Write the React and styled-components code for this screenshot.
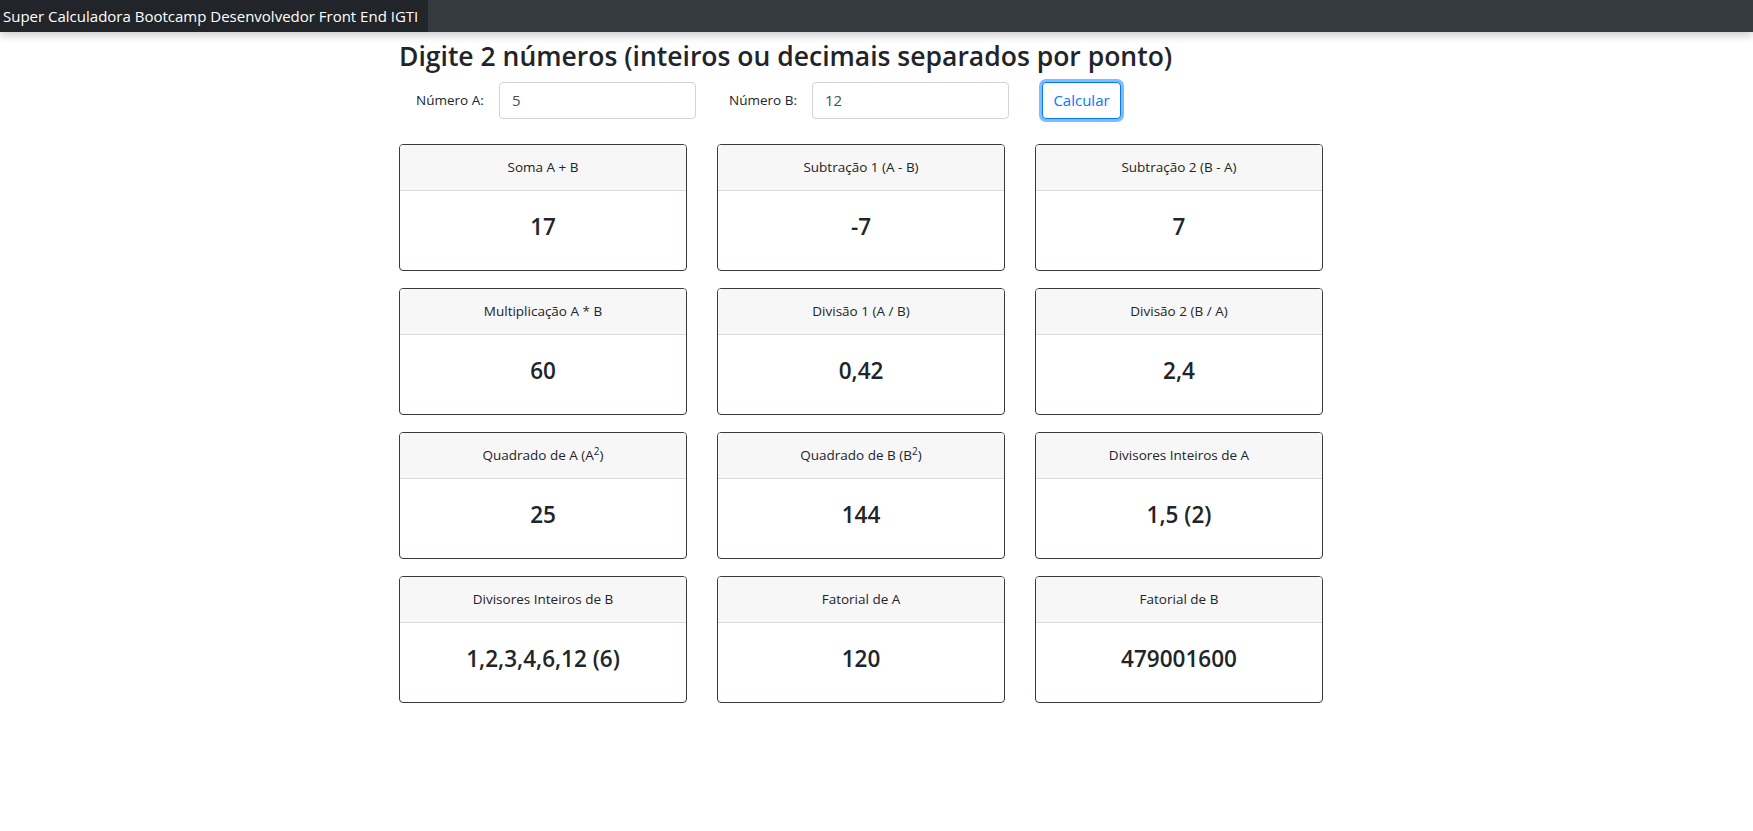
import React, { useState } from 'react';
import styled, { createGlobalStyle } from 'styled-components';

const GlobalStyle = createGlobalStyle`
    * {
        box-sizing: border-box;
    }
    body {
        margin: 0;
        background: #fff;
        color: #212529;
        font-family: "Open Sans", "Noto Sans", sans-serif;
    }
`;

const StyledNavbar = styled.header`
    height: 32px;
    display: flex;
    background-color: #343a40;
    box-shadow: 0 3px 10px rgba(0, 0, 0, .22);
`;

const StyledBrand = styled.div`
    display: flex;
    align-items: center;
    width: 428px;
    padding: 0 3px;
    background-color: #212529;
    color: #fff;
    font-size: 15px;
    white-space: nowrap;
`;

const StyledMain = styled.main`
    width: 955px;
    margin: 0 auto;
`;

const StyledTitle = styled.h1`
    margin: 9px 0 9px;
    font-size: 26.5px;
    font-weight: 600;
    line-height: 1.2;
    white-space: nowrap;
`;

const StyledForm = styled.form`
    display: flex;
    align-items: center;
    gap: 33px;
    padding-left: 17px;
`;

const StyledField = styled.label`
    display: flex;
    align-items: center;
    gap: 17px;
    font-size: 13.5px;
`;

const StyledLabelText = styled.span`
    flex-shrink: 0;
    width: 66px;
    white-space: nowrap;
`;

const StyledInput = styled.input`
    flex-shrink: 0;
    width: 197px;
    height: 37px;
    padding: 0 12px;
    border: 1px solid #ced4da;
    border-radius: 4px;
    font-family: inherit;
    font-size: 15px;
    color: #495057;
    outline: none;
`;

const StyledButton = styled.button`
    flex-shrink: 0;
    width: 79px;
    height: 37px;
    padding: 0;
    border: 1px solid #007bff;
    border-radius: 4px;
    background: #fff;
    color: #007bff;
    font-family: inherit;
    font-size: 15px;
    box-shadow: 0 0 0 3px rgba(0, 123, 255, .5);
    cursor: pointer;
`;

const StyledGrid = styled.section`
    display: grid;
    grid-template-columns: repeat(3, 288px);
    column-gap: 30px;
    row-gap: 17px;
    margin-top: 25px;
`;

const StyledCard = styled.div`
    height: 127px;
    display: flex;
    flex-direction: column;
    border: 1px solid #343a40;
    border-radius: 4px;
    overflow: hidden;
`;

const StyledCardHeader = styled.div`
    height: 46px;
    display: flex;
    align-items: center;
    justify-content: center;
    background-color: #f7f7f7;
    border-bottom: 1px solid #dcdcdc;
    font-size: 13.5px;

    sup {
        font-size: 10px;
        line-height: 0;
    }
`;

const StyledCardBody = styled.div`
    flex: 1;
    display: flex;
    align-items: center;
    justify-content: center;
    padding-bottom: 8px;
    font-size: 22.5px;
    font-weight: 600;
`;

const format = (value) => {
    const rounded = Number(value.toFixed(2));
    return String(rounded).replace('.', ',');
};

const divisors = (n) => {
    const list = [];
    for (let i = 1; i <= n; i++) {
        if (n % i === 0) list.push(i);
    }
    return `${list.join(',')} (${list.length})`;
};

const factorial = (n) => {
    let result = 1;
    for (let i = 2; i <= n; i++) result *= i;
    return result;
};

const calculate = (a, b) => [
    { title: 'Soma A + B', value: format(a + b) },
    { title: 'Subtração 1 (A - B)', value: format(a - b) },
    { title: 'Subtração 2 (B - A)', value: format(b - a) },
    { title: 'Multiplicação A * B', value: format(a * b) },
    { title: 'Divisão 1 (A / B)', value: format(a / b) },
    { title: 'Divisão 2 (B / A)', value: format(b / a) },
    { title: <>Quadrado de A (A<sup>2</sup>)</>, value: format(a * a) },
    { title: <>Quadrado de B (B<sup>2</sup>)</>, value: format(b * b) },
    { title: 'Divisores Inteiros de A', value: divisors(a) },
    { title: 'Divisores Inteiros de B', value: divisors(b) },
    { title: 'Fatorial de A', value: factorial(a) },
    { title: 'Fatorial de B', value: factorial(b) },
];

const App = () => {
    const [numberA, setNumberA] = useState('5');
    const [numberB, setNumberB] = useState('12');
    const [results, setResults] = useState(calculate(5, 12));

    const handleSubmit = (event) => {
        event.preventDefault();
        setResults(calculate(parseFloat(numberA), parseFloat(numberB)));
    };

    return (
        <>
            <GlobalStyle />
            <StyledNavbar>
                <StyledBrand>Super Calculadora Bootcamp Desenvolvedor Front End IGTI</StyledBrand>
            </StyledNavbar>
            <StyledMain>
                <StyledTitle>Digite 2 números (inteiros ou decimais separados por ponto)</StyledTitle>
                <StyledForm onSubmit={handleSubmit}>
                    <StyledField>
                        <StyledLabelText>Número A:</StyledLabelText>
                        <StyledInput value={numberA} onChange={(e) => setNumberA(e.target.value)} />
                    </StyledField>
                    <StyledField>
                        <StyledLabelText>Número B:</StyledLabelText>
                        <StyledInput value={numberB} onChange={(e) => setNumberB(e.target.value)} />
                    </StyledField>
                    <StyledButton type="submit">Calcular</StyledButton>
                </StyledForm>
                <StyledGrid>
                    {results.map((item, index) => (
                        <StyledCard key={index}>
                            <StyledCardHeader>
                                <span>{item.title}</span>
                            </StyledCardHeader>
                            <StyledCardBody>{item.value}</StyledCardBody>
                        </StyledCard>
                    ))}
                </StyledGrid>
            </StyledMain>
        </>
    );
};

export default App;
